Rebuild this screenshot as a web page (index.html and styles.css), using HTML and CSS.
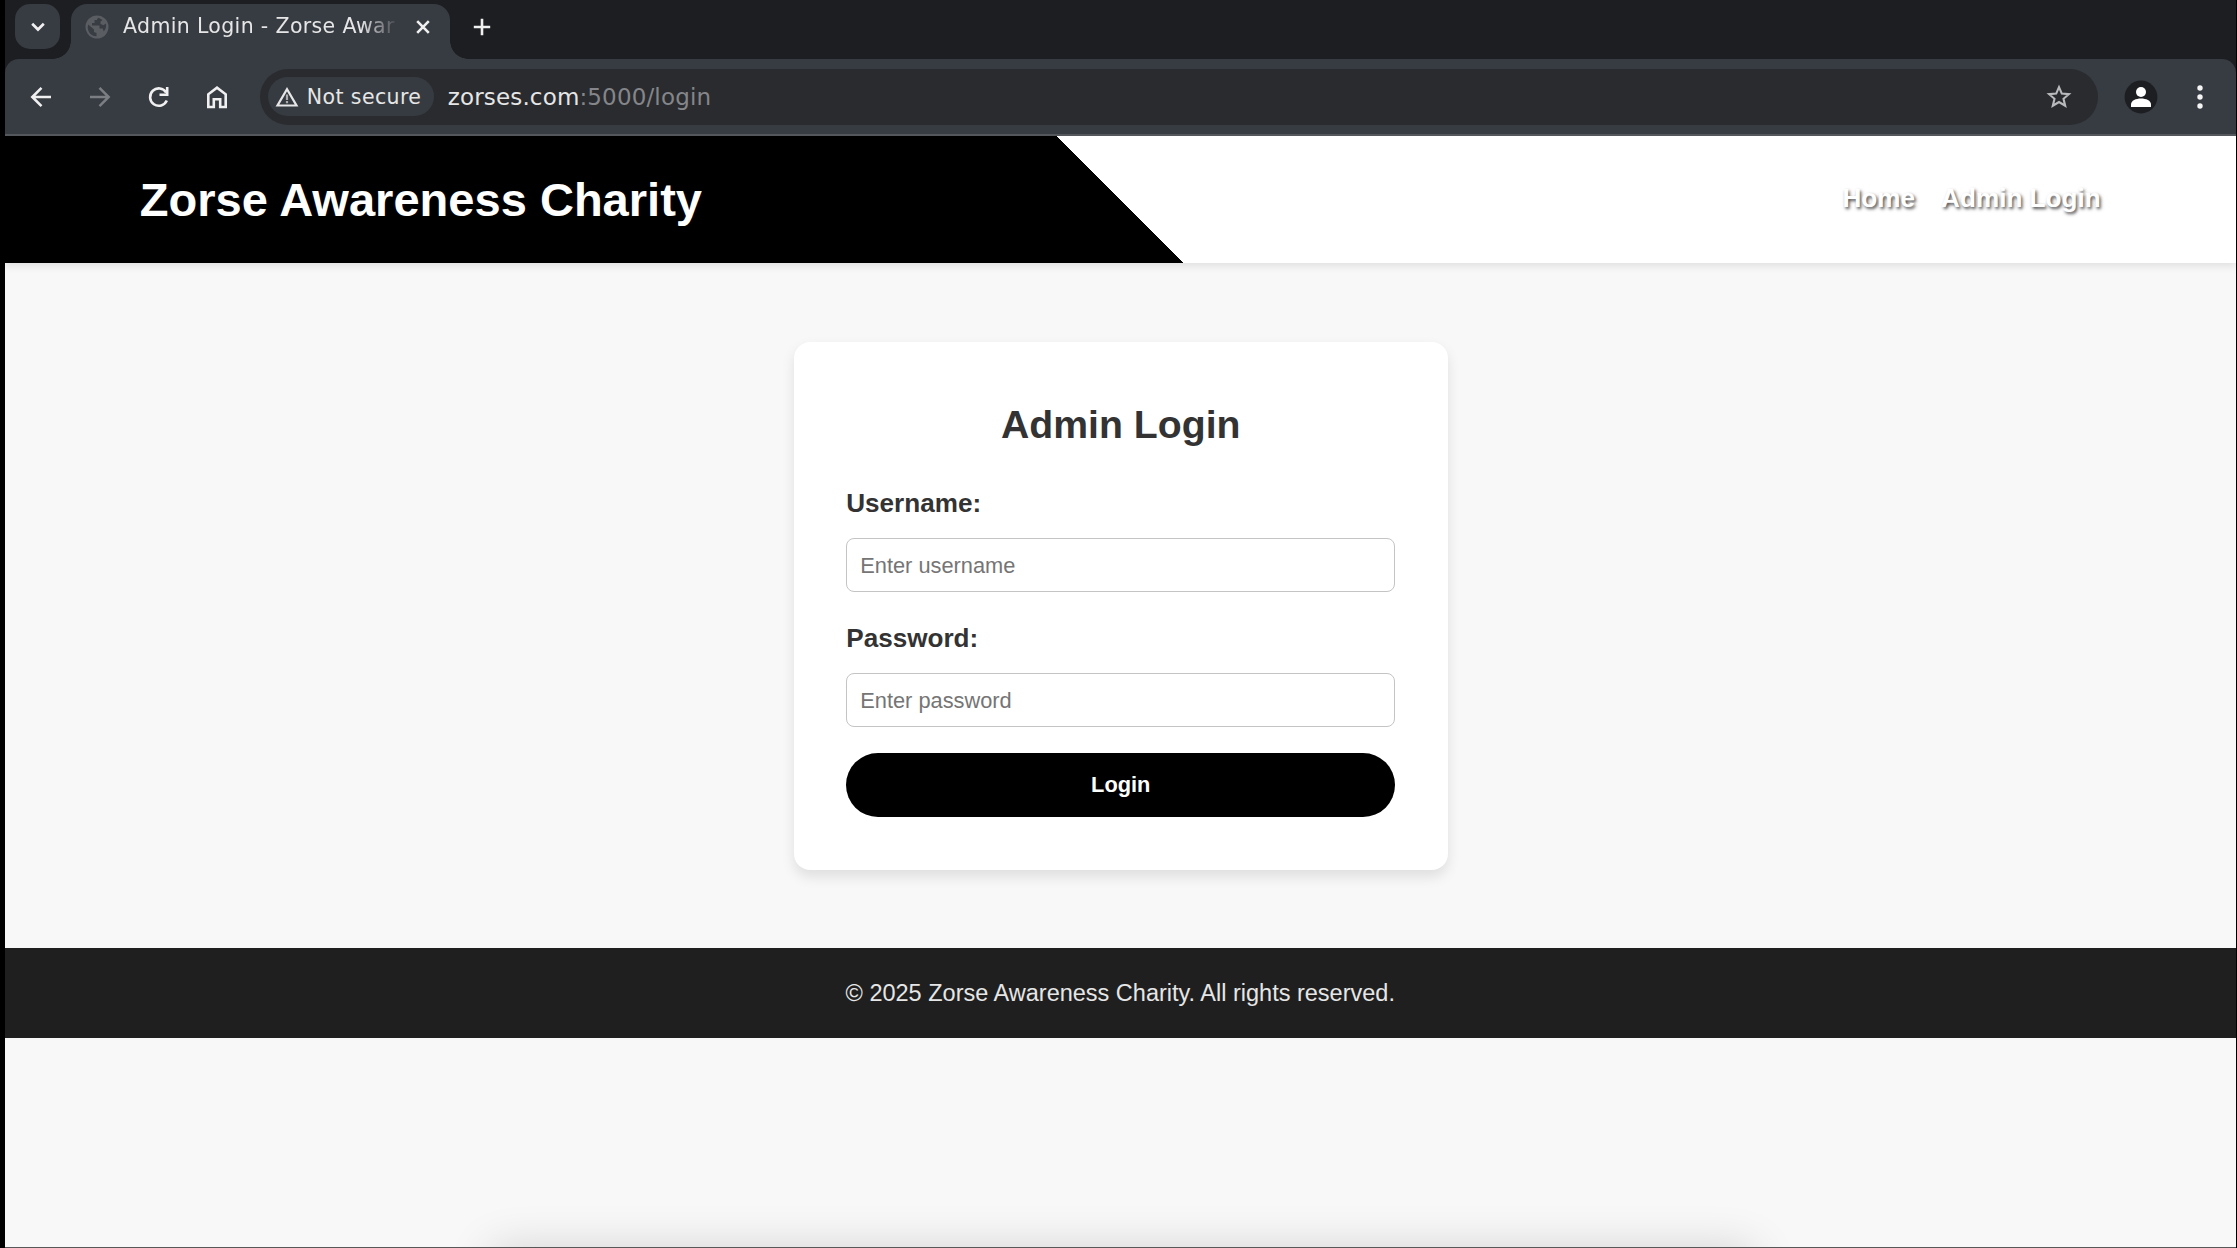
FILE: index.html
```html
<!DOCTYPE html>
<html lang="en">
<head>
<meta charset="utf-8">
<title>Admin Login - Zorse Awareness Charity</title>
<link rel="stylesheet" href="styles.css">
</head>
<body>
<div class="window">
  <div class="chrome">
    <div class="tabstrip">
      <div class="tab-search"><svg width="14" height="10" viewBox="0 0 14 10"><path d="M1.2 1.8 7 7.5l5.800-5.700" fill="none" stroke="#f0f0f0" stroke-width="2.700"/></svg></div>
      <div class="tab">
        <svg class="globe" width="24" height="24" viewBox="0 0 24 24"><circle cx="12" cy="12" r="11.500" fill="#5a5d61"/><path d="M3.200 9.500 9 14.500v2.500l2.500 1v3.300C6 21 2.700 17 2.700 12zM13.500 2.800c-1 .5-1.500 1.200-1.500 2.200H9.500v3H7v2.500h7.500v3h3.200l1 3C21 14 21.700 11 20.800 8.500l-2.300 1.800-3-1.300V6.500L17.500 5z" fill="#383c43"/></svg>
        <span class="tab-title">Admin Login - Zorse Awar</span>
        <svg class="close" width="14" height="14" viewBox="0 0 14 14"><path d="m1.200 1.200 11.600 11.600M12.800 1.200 1.200 12.800" stroke="#f0f0f0" stroke-width="2.600"/></svg>
      </div>
      <svg class="new-tab" width="18" height="18" viewBox="0 0 18 18"><path d="M9 .8v16.400M.8 9h16.400" stroke="#f0f0f0" stroke-width="2.600"/></svg>
    </div>
    <div class="toolbar">
      <div class="nav-icons">
        <svg width="24" height="24" viewBox="0 0 24 24"><path d="M22 12H3.500M12.500 2.800 3.300 12l9.200 9.200" fill="none" stroke="#f0f0f0" stroke-width="2.600"/></svg>
        <svg width="24" height="24" viewBox="0 0 24 24"><path d="M2 12h18.500M11.500 2.800l9.200 9.200-9.200 9.200" fill="none" stroke="#7b7e82" stroke-width="2.500"/></svg>
        <svg width="24" height="24" viewBox="0 0 24 24"><path d="M20.800 15.500A8.700 8.700 0 1 1 20.200 7.500M21.200 2v7.700h-7.700" fill="none" stroke="#f0f0f0" stroke-width="2.600"/></svg>
        <svg width="24" height="24" viewBox="0 0 24 24"><path d="M3.300 22V9.300L12 2.700l8.700 6.600V22h-5.500v-7.700H8.800V22z" fill="none" stroke="#f0f0f0" stroke-width="2.600"/></svg>
      </div>
      <div class="omnibox">
        <div class="chip"><svg width="24" height="20" viewBox="0 0 24 20"><path d="M2.500 18.500h19L12 2.200z" fill="none" stroke="#e6e6e6" stroke-width="2.200"/><path d="M12 7.500v5.500M12 14v2.300" stroke="#a9abad" stroke-width="2.200"/></svg><span>Not secure</span></div>
        <div class="url">zorses.com<span class="path">:5000/login</span></div>
        <svg class="star" width="26" height="25" viewBox="0 0 26 25"><path d="m13 3.200 2.800 6.400 7.100.6-5.400 4.600 1.700 6.900-6.200-3.700-6.200 3.700 1.700-6.900-5.400-4.600 7.100-.6z" fill="none" stroke="#b9babc" stroke-width="2.100"/></svg>
      </div>
      <svg class="profile" width="34" height="34" viewBox="0 0 34 34"><circle cx="17" cy="17" r="16.400" fill="#1d1e22"/><circle cx="17" cy="12" r="5" fill="#fff"/><path d="M7 27v-2.500c0-4 5-6 10-6s10 2 10 6V27z" fill="#fff"/></svg>
      <svg class="menu" width="6" height="26" viewBox="0 0 6 26"><g fill="#f5f5f5"><circle cx="3" cy="4" r="2.700"/><circle cx="3" cy="13" r="2.700"/><circle cx="3" cy="22" r="2.700"/></g></svg>
    </div>
  </div>
  <div class="site">
    <header class="site-header">
      <h1>Zorse Awareness Charity</h1>
      <nav><a>Home</a><a>Admin Login</a></nav>
    </header>
    <main>
      <form class="card">
        <h2>Admin Login</h2>
        <label for="user">Username:</label>
        <input id="user" type="text" placeholder="Enter username">
        <label for="pass">Password:</label>
        <input id="pass" type="password" placeholder="Enter password">
        <button type="button">Login</button>
      </form>
    </main>
    <footer>© 2025 Zorse Awareness Charity. All rights reserved.</footer>
    <div class="dock-shadow"></div>
  </div>
</div>
</body>
</html>
```
FILE: styles.css
```css
* { box-sizing: border-box; }
svg { display: block; flex: none; }
body { margin: 0; background: #000; overflow: hidden; }
.window {
  height: 1248px;
  padding: 0 1.5px 0 5px;
  display: flex;
  flex-direction: column;
  font-family: "DejaVu Sans", sans-serif;
  color: #e6e6e6;
}
.chrome { flex: none; background: #1d1e22; border-bottom: 2px solid #54585d; }
.tabstrip {
  height: 59px;
  display: flex;
  padding: 4px 0 0 10px;
}
.tab-search {
  width: 45px;
  height: 45px;
  border-radius: 15px;
  background: #373b42;
  display: grid;
  place-items: center;
}
.tab {
  position: relative;
  width: 379px;
  height: 55px;
  margin-left: 11px;
  padding: 0 20px 10px 14px;
  border-radius: 16px 16px 0 0;
  background: #373b42;
  display: flex;
  align-items: center;
}
.tab::before, .tab::after {
  content: "";
  position: absolute;
  bottom: 0;
  width: 18px;
  height: 18px;
}
.tab::before { right: 100%; background: radial-gradient(circle at 0 0, transparent 17.5px, #373b42 18px); }
.tab::after { left: 100%; background: radial-gradient(circle at 100% 0, transparent 17.5px, #373b42 18px); }
.tab-title {
  width: 276px;
  margin-left: 14px;
  padding-bottom: 1px;
  white-space: nowrap;
  font-size: 20.5px;
  line-height: 26px;
  letter-spacing: 0.35px;
  -webkit-mask-image: linear-gradient(90deg, #000 238px, transparent 276px);
  mask-image: linear-gradient(90deg, #000 238px, transparent 276px);
}
.close { margin-left: auto; }
.new-tab { margin: 14px 0 0 23px; }
.toolbar {
  height: 75.4px;
  display: flex;
  align-items: center;
  background: #373b42;
  border-radius: 14px 14px 0 0;
  padding-left: 24px;
}
.nav-icons { display: flex; gap: 34.6px; }
.omnibox {
  width: 1838px;
  height: 56px;
  margin-left: 31px;
  padding: 0 26px 0 8px;
  border-radius: 28px;
  background: #2a2b2f;
  display: flex;
  align-items: center;
}
.chip {
  width: 166px;
  height: 39px;
  padding-left: 7.5px;
  border-radius: 20px;
  background: #363b41;
  display: flex;
  align-items: center;
  gap: 7.5px;
  font-size: 20.5px;
  letter-spacing: 0.4px;
  white-space: nowrap;
}
.url { margin-left: 14px; font-size: 23px; letter-spacing: 0.15px; }
.path { color: #85868a; }
.star { margin-left: auto; }
.profile { margin-left: 26px; }
.menu { margin-left: 39px; }
.site {
  position: relative;
  flex: 1;
  overflow: hidden;
  background: #f8f8f8;
  border-bottom: 1px solid #58585a;
  font-family: "Liberation Sans", sans-serif;
  color: #333;
}
.site-header {
  height: 127px;
  padding: 0 134.8px;
  display: flex;
  align-items: center;
  justify-content: space-between;
  background: linear-gradient(45deg, #000 50%, #fff 50%);
  box-shadow: 0 3.3px 8px rgba(0, 0, 0, 0.1);
}
h1 { margin: 0; font-size: 47.05px; line-height: 60px; color: #fff; }
nav {
  display: flex;
  gap: 26px;
  padding-bottom: 2px;
  font-size: 26.14px;
  font-weight: bold;
  color: #fff;
  text-shadow: 1.6px 1.6px 3.3px rgba(0, 0, 0, 0.7);
}
main { padding: 78.5px 0 78.2px 1px; display: flex; justify-content: center; }
.card {
  width: 653.6px;
  height: 528px;
  padding: 52.3px;
  border-radius: 16.3px;
  background: #fff;
  box-shadow: 0 6.5px 13px rgba(0, 0, 0, 0.1);
  display: flex;
  flex-direction: column;
}
h2 { margin: 0 0 26px; font-size: 39.2px; line-height: 62.7px; text-align: center; }
label { font-size: 26.1px; line-height: 41.8px; font-weight: bold; margin-bottom: 13.5px; }
input {
  height: 54px;
  margin: 0 0 26px;
  padding: 1px 13px 0;
  border: 1.6px solid #c4c4c4;
  border-radius: 8px;
  background: #fff;
  font: 21.8px "Liberation Sans", sans-serif;
}
input::placeholder { color: #757575; }
button {
  height: 64px;
  border: 0;
  border-radius: 32px;
  background: #000;
  color: #fff;
  font: bold 21.8px "Liberation Sans", sans-serif;
}
footer {
  height: 90px;
  display: grid;
  place-items: center;
  background: #1f1f1f;
  color: #e6e6e6;
  font-size: 23.5px;
}
/* Soft shadow cast upward by the dock below the window. */
.dock-shadow {
  position: absolute;
  left: 490px;
  top: 100%;
  width: 1255px;
  height: 60px;
  box-shadow: 0 6px 46px 4px rgba(0, 0, 0, 0.16);
}
```
